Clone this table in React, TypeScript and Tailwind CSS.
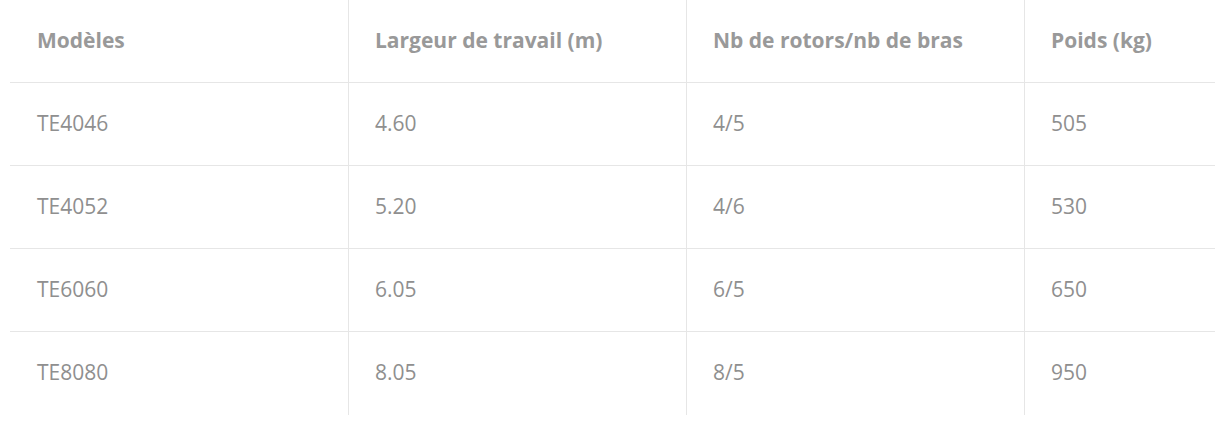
import React from "react";

const headers = ["Modèles", "Largeur de travail (m)", "Nb de rotors/nb de bras", "Poids (kg)"];
const rows = [
  ["TE4046", "4.60", "4/5", "505"],
  ["TE4052", "5.20", "4/6", "530"],
  ["TE6060", "6.05", "6/5", "650"],
  ["TE8080", "8.05", "8/5", "950"],
];

export default function App() {
  const all = [headers, ...rows];
  return (
    <div className="w-full h-[429px] bg-white overflow-hidden" style={{ fontFamily: '"Open Sans", "Liberation Sans", sans-serif' }}>
      <div className="ml-[10px] grid grid-cols-[338px_338px_338px_1fr]">
        {all.map((r, ri) =>
          r.map((c, ci) => (
            <div
              key={`${ri}-${ci}`}
              className={`h-[83px] flex items-center text-[21px] leading-[28px] pb-[3px] ${
                ri < all.length - 1 ? "border-b border-[#e6e6e6]" : "h-[82px]"
              } ${ci > 0 ? "border-l border-[#e6e6e6] pl-[26px]" : "pl-[27px]"} ${
                ri === 0 ? "font-bold text-[#999999]" : "text-[#8f8f8f]"
              }`}
            >
              {c}
            </div>
          ))
        )}
      </div>
    </div>
  );
}
